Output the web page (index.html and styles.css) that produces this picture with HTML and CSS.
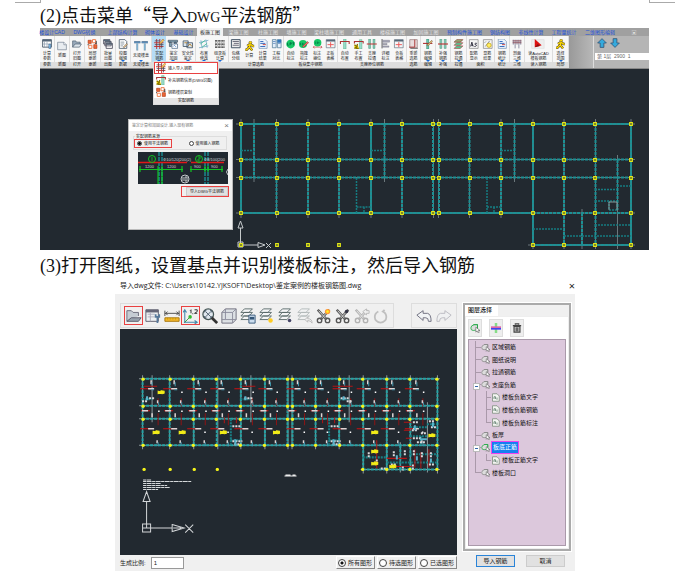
FILE: index.html
```
<!DOCTYPE html>
<html lang="zh-CN">
<head>
<meta charset="utf-8">
<title>导入 DWG 平法钢筋</title>
<link rel="stylesheet" href="styles.css">
</head>
<body>
<svg class="defs" aria-hidden="true">
  <symbol id="i-table" viewBox="0 0 16 16"><path d="M1 1h14v12H1z" fill="#fff" stroke="#456" stroke-width="1.4"/><path d="M1 1h14v3H1z" fill="#567"/><path d="M4 4v9M8 4v9M1 8h10" stroke="#89a" /><path d="M11 8h3v7h-3z" fill="#8cf" stroke="#357"/></symbol>
  <symbol id="i-doc" viewBox="0 0 16 16"><path d="M1 2h10l4 4v8H1z" fill="#e8ecf0" stroke="#678"/><path d="M11 2v4h4" fill="#fff" stroke="#678"/></symbol>
  <symbol id="i-folder" viewBox="0 0 16 16"><path d="M1 13V3h5l1 2h6v3" fill="#9ab" stroke="#456"/><path d="M1 13l4-5h10l-3 5z" fill="#dde5ec" stroke="#456"/></symbol>
  <symbol id="i-swap" viewBox="0 0 16 16"><path d="M1 2h5v5H1zM10 9h5v6h-5z" fill="#e63" stroke="#a31"/><path d="M8 1h5v5H8zM2 10h5v5H2z" fill="#fff" stroke="#e74" stroke-width="1.5"/><path d="M14 3v4M1 8v2M12 7h3" stroke="#333" stroke-width="1.4"/></symbol>
  <symbol id="i-stack" viewBox="0 0 16 16"><g fill="#fff" stroke="#445" stroke-width="1.3"><path d="M1 1h10v7H1zM3 4h10v7H3zM5 7h10v8H5z"/></g><path d="M1 1h10v2H1zM3 4h10v2H3zM5 7h10v2H5z" fill="#567"/></symbol>
  <symbol id="i-edit" viewBox="0 0 16 16"><path d="M2 1h9l3 3v11H2z" fill="#fff" stroke="#456" stroke-width="1.3"/><path d="M4 5h6M4 8h6M4 11h4" stroke="#567"/><path d="M8 13l6-6 1 2-5 5z" fill="#db8" stroke="#654" stroke-width=".7"/></symbol>
  <symbol id="i-tt" viewBox="0 0 24 16"><path d="M6 4v11M18 4v11" stroke="#79a" stroke-width="3"/><path d="M1 2h10M13 2h10" stroke="#357" stroke-width="3"/><path d="M1 2h10M13 2h10M6 4v10M18 4v10" stroke="#8cf"/></symbol>
  <symbol id="i-rebar" viewBox="0 0 16 16"><path d="M4 0v16M9 0v16M0 6h15M0 12h15" stroke="#b33" stroke-width="1.5"/><path d="M1 3h8M1 9h14M12 6v9" stroke="#445" stroke-width="1.2"/><path d="M8 7l6-7 2 2-6 6z" fill="#fc5" stroke="#853" stroke-width=".7"/></symbol>
  <symbol id="i-beam" viewBox="0 0 16 16"><path d="M0 2h15v3H0zM2 5h3v7H2zM10 5h3v5h-3z" fill="#8ab" stroke="#345"/><path d="M6 8h9v7H6z" fill="#fff" stroke="#357"/><path d="M8 12l2-2 3 3" stroke="#26b" fill="none"/></symbol>
  <symbol id="i-check" viewBox="0 0 16 16"><path d="M0 3h8v9H0zM6 6h9v8H6z" fill="#d8e4ee" stroke="#456" stroke-width="1.3"/><path d="M8 11l3-3 3 4M2 6h4" stroke="#b71" fill="none" stroke-width="1.3"/></symbol>
  <symbol id="i-plan" viewBox="0 0 16 16"><path d="M0 6l15-4M0 14l15-3M3 2l2 13M11 1l2 13" stroke="#59b" fill="none"/><path d="M2 8l8-6M5 13l8-6" stroke="#4b9" stroke-width="1.4"/></symbol>
  <symbol id="i-dash" viewBox="0 0 16 16"><path d="M0 3h16M0 8h16M0 13h16" stroke="#333" stroke-width="2" stroke-dasharray="4 1"/><path d="M0 5.500h16M0 10.500h16" stroke="#888" stroke-dasharray="2 1"/></symbol>
  <symbol id="i-list" viewBox="0 0 16 16"><path d="M1 1h14v13H1z" fill="#eee" stroke="#456" stroke-width="1.6"/><path d="M3 4h10M5 7h8M3 10h10" stroke="#556" stroke-width="1.3"/></symbol>
  <symbol id="i-man" viewBox="0 0 16 16"><circle cx="9" cy="2.500" r="2.300" fill="#fd0" stroke="#542" stroke-width=".8"/><path d="M8 5l-4 3M9 5l4 3h2M8 5v5l4 5M8 9l-5 5H1" stroke="#542" stroke-width="3.800" fill="none"/><path d="M8 5l-4 3M9 5l4 3h2M8 5v5l4 5M8 9l-5 5H1" stroke="#fd0" stroke-width="2" fill="none"/></symbol>
  <symbol id="i-report" viewBox="0 0 16 16"><path d="M2 0h9l4 4v11H2z" fill="#eef4fc" stroke="#68a"/><path d="M4 4h5M4 7h8M4 12h8" stroke="#36b" stroke-width="1.5"/><path d="M8 9h5" stroke="#c44" stroke-width="1.500"/></symbol>
  <symbol id="i-book" viewBox="0 0 16 16"><path d="M1 1h6v13H1zM9 1h6v13H9z" fill="#e4effa" stroke="#368"/><path d="M2 4h4M2 7h4M10 4h4M10 7h4" stroke="#36a"/><path d="M9 1h6v5H9z" fill="#37b"/></symbol>
  <symbol id="i-badge" viewBox="0 0 16 16"><circle cx="8" cy="8" r="7" fill="#17c765"/><path d="M3 10V6M3 10h2M7 10V6h2v2H7M11 6h3M12.500 6v4" stroke="#064" fill="none" stroke-width="1.2"/></symbol>
  <symbol id="i-badge2" viewBox="0 0 16 16"><circle cx="7" cy="8" r="6.500" fill="#17c765"/><path d="M3 10V6M6 10V6M6 8h3" stroke="#064"/><path d="M6 12l8-8 2 2-8 7z" fill="#f66" stroke="#633" stroke-width=".7"/></symbol>
  <symbol id="i-badge3" viewBox="0 0 16 16"><circle cx="8" cy="6" r="6" fill="#17c765"/><path d="M5 8V4M8 8V4M8 6h3" stroke="#064"/><path d="M1 13h14M3 11l-2 2 2 2M13 11l2 2-2 2" stroke="#b33" fill="none"/></symbol>
  <symbol id="i-cal" viewBox="0 0 16 16"><path d="M1 1h14v13H1z" fill="#f4f6f8" stroke="#567"/><path d="M1 1h14v3H1z" fill="#567"/><path d="M8 5v8M3 9h10" stroke="#e55" stroke-width="1.500"/></symbol>
  <symbol id="i-sup" viewBox="0 0 16 16"><path d="M6 0h4v16H6z" fill="#9dc" stroke="#396" stroke-width=".6"/><path d="M1 8V4h14v4" stroke="#a33" fill="none" stroke-width="1.700"/></symbol>
  <symbol id="i-suphand" viewBox="0 0 16 16"><path d="M9 1h4v15H9z" fill="#9dc" stroke="#396" stroke-width=".6"/><path d="M1 7V4h14v3" stroke="#a33" fill="none" stroke-width="1.700"/><path d="M1 9l4 3-4 3M6 8l-2 7h4" stroke="#870" stroke-width="2" fill="#fd0"/></symbol>
  <symbol id="i-two" viewBox="0 0 16 16"><path d="M3 0h3v15H3zM10 0h3v15h-3z" fill="#8cb" stroke="#386" stroke-width=".7"/><path d="M0 8h16" stroke="#b33" stroke-width="1.800"/></symbol>
  <symbol id="i-align" viewBox="0 0 16 16"><path d="M2 0v15" stroke="#555" stroke-width="1.5"/><path d="M3 2h11v3H3zM3 7h7v2H3zM3 11h10v2H3z" fill="#aab" stroke="#667" stroke-width=".6"/></symbol>
  <symbol id="i-sect" viewBox="0 0 16 16"><path d="M2 1h12v13H2z" fill="#e9dcdc" stroke="#866"/><path d="M10 1v12H1" stroke="#a33" stroke-width="1.500" fill="none"/><path d="M3 15h12" stroke="#333"/></symbol>
  <symbol id="i-cross" viewBox="0 0 16 16"><path d="M6 0h3v16H6z" fill="#7cb" stroke="#286"/><path d="M0 7h15" stroke="#a22" stroke-width="1.600"/><path d="M6 10l8-8 1 2-7 7z" fill="#eb6" stroke="#444" stroke-width=".7"/></symbol>
  <symbol id="i-layers" viewBox="0 0 16 16"><path d="M1 5l4-4h10l-4 4z" fill="#9a7" stroke="#732"/><path d="M1 10l4-4h10l-4 4zM1 15l4-4h10l-4 4z" fill="#5c9" stroke="#a33"/></symbol>
  <symbol id="i-as" viewBox="0 0 16 16"><path d="M1 1h14v14H1z" fill="#f5f5f5" stroke="#777"/><path d="M3 12l2-7 2 7M4 10h3M13 7c-4-1-4 2-2 2s2 3-2 3" stroke="#223" stroke-width="1.400" fill="none"/></symbol>
  <symbol id="i-bulb" viewBox="0 0 16 16"><path d="M1 1h14v14H1z" fill="#f5f5f5" stroke="#777"/><path d="M3 6l2-2M4 12l7-9" stroke="#456"/><circle cx="10" cy="10" r="3.500" fill="#fe6" stroke="#b90"/></symbol>
  <symbol id="i-comb" viewBox="0 0 16 16"><path d="M1 3h14M1 6h14" stroke="#a44" stroke-width="1.400"/><path d="M2 1v8M5 1v14M8 1v8M11 1v14M14 1v8" stroke="#557"/></symbol>
  <symbol id="i-cad" viewBox="0 0 24 16"><path d="M1 1h20v14H1z" fill="#eee" stroke="#ddd"/><path d="M6 0l11 10-3 1-8 2z" fill="#d11"/><path d="M6 13l8-2-3-3z" fill="#811"/></symbol>
  <symbol id="i-up" viewBox="0 0 16 16"><path d="M8 1l7 7h-4v7H5V8H1z" fill="#3ad" stroke="#357" stroke-width="1.300"/></symbol>
  <symbol id="i-down" viewBox="0 0 16 16"><path d="M8 15l7-7h-4V1H5v7H1z" fill="#3ad" stroke="#357" stroke-width="1.300"/></symbol>

  <symbol id="t-open" viewBox="0 0 18 18"><path d="M1 15V3h5l2 2h6v4" fill="#c5ccd3" stroke="#667"/><path d="M1 15l5-4h11l-3 4z" fill="#98a3ae" stroke="#556"/></symbol>
  <symbol id="t-form" viewBox="0 0 18 18"><path d="M1 2h14v13H1z" fill="#eef0f2" stroke="#556"/><path d="M1 2h14v3H1z" fill="#667"/><path d="M3 7h8M3 10h8M6 5v10" stroke="#aab"/><path d="M12 7v3h4V7M14 10v7" stroke="#57799b" stroke-width="2" fill="none"/></symbol>
  <symbol id="t-rule" viewBox="0 0 18 18"><path d="M1 3v6M17 3v6M1 6h16M4 4L2 6l2 2M14 4l2 2-2 2" stroke="#444" fill="none"/><path d="M1 11h16v4H1z" fill="#f2b72c" stroke="#a67408"/><path d="M4 11v2M7 11v2M10 11v2M13 11v2" stroke="#c90"/></symbol>
  <symbol id="t-base" viewBox="0 0 18 18"><path d="M2 17V2M1 16h15M0 5l2-3 2 3M13 14l3 2-3 2" stroke="#48a" fill="none" stroke-width="1.200"/><path d="M2 16l7-7" stroke="#393"/><circle cx="8" cy="10" r="2" fill="#3b3"/><path d="M8 3l1-1v4M11 6v1M13 2h3v2l-3 2h3" stroke="#222" fill="none"/></symbol>
  <symbol id="t-zoom" viewBox="0 0 18 18"><circle cx="7" cy="7" r="6" fill="#dfe7ee" stroke="#455" stroke-width="1.400"/><path d="M4 4l6 6M10 4l-6 6M3 5V3h2M9 3h2v2M3 9v2h2M11 9v2H9" stroke="#456" fill="none"/><path d="M11 11l6 6" stroke="#333" stroke-width="3"/></symbol>
  <symbol id="t-cube" viewBox="0 0 18 18"><path d="M1 5l4-4h12v12l-4 4H1z" fill="#dde1e5" stroke="#667"/><path d="M1 5h12v12M13 5l4-4M5 1v12H1M5 13h12" fill="none" stroke="#889"/></symbol>
  <symbol id="t-lay" viewBox="0 0 18 18"><g fill="#f4f5f6" stroke="#566"><path d="M1 13l4-4h9l-4 4zM1 9l4-4h9l-4 4zM1 5l4-4h9l-4 4z"/></g></symbol>
  <symbol id="t-cut" viewBox="0 0 18 18"><path d="M2 2l10 11M15 2L5 13" stroke="#555" stroke-width="2.800"/><path d="M3 3l9 10M14 3L5 13" stroke="#ddd"/><circle cx="4" cy="14" r="2.500" fill="none" stroke="#555" stroke-width="1.500"/><circle cx="13" cy="14" r="2.500" fill="none" stroke="#555" stroke-width="1.500"/></symbol>
  <symbol id="t-undo" viewBox="0 0 18 18"><path d="M1 8l7-5v3h5q4 1 4 9h-3q0-4-3-4H8v3z" fill="#f1f3f5" stroke="#667"/></symbol>
  <symbol id="n-pick" viewBox="0 0 12 12"><path d="M1 6q0-3 4-4h4v5q-2 2-5 2-3 0-3-3z" fill="#ddd" stroke="currentColor"/><path d="M4 2h5v4" fill="none" stroke="currentColor"/><path d="M7 5v6l1.500-1.500L10 12l1-1-1-2h2z" fill="#fff" stroke="#555" stroke-width=".7"/></symbol>
  <symbol id="n-page" viewBox="0 0 12 12"><path d="M2 1h6l3 3v7H2z" fill="#f4f6f2" stroke="#787"/><path d="M4 8V5h2v3M8 6v3" stroke="#576" fill="none"/></symbol>

  <symbol id="node" viewBox="0 0 4 4"><path d="M.7.7h2.600v2.600H.7z" fill="#263238" stroke="#e6ea16" stroke-width="1.200"/></symbol>
  <symbol id="dot" viewBox="0 0 4 4"><circle cx="2" cy="2" r="1.700" fill="#f6f51a"/></symbol>
  <g id="marks"><path d="M-6 388.500H6M-5 410.500H4M-6 428.500H5" stroke="#c11" /><path d="M12 398v8M12 413v12" stroke="#8c1515"/><path d="M2 388.500h6M-4 410.500h6M2 428.500h6M5 380v4M11.500 400v3M11 440v3M6 413v4" stroke="#ded5d5" stroke-width="1.500"/><path d="M12 392h1.500M12 411h1.500M11 432h1.500" stroke="#fff" stroke-width="1.500"/><path d="M6 382v4M12.500 402v3M12 442v4M5 389.500h3" stroke="#4197ad"/></g>
  <path id="blob" d="M-3-1l2 .5L0-1.500l3 .5v2l-2 .5-2-.5-2 .5z" fill="#f3ed18" stroke="#f3ed18"/>
</svg>

<div class="crop-marks"><i></i><i></i></div>
<main>
  <h1><span>(2)</span>点击菜单“导入<span class="term">DWG</span>平法钢筋”</h1>

  <section class="cad-app">
    <nav class="tabs">
      <a href="#">楼设计CAD</a><a href="#">DWG转换</a><a href="#">上部结构计算</a><a href="#">砌体设计</a><a href="#">基础设计</a><a href="#" class="active">板施工图</a><a href="#" class="dim">梁施工图</a><a href="#" class="dim">柱施工图</a><a href="#" class="dim">墙施工图</a><a href="#" class="dim">梁柱墙施工图</a><a href="#" class="dim">通用工具</a><a href="#" class="dim">楼梯施工图</a><a href="#" class="dim">加固施工图</a><a href="#">预制构件施工图</a><a href="#">钢结构图</a><a href="#">非线性计算</a><a href="#">工程量统计</a><a href="#">二维图形编辑</a><a href="#" class="dim">▣</a>
    </nav>
    <div class="ribbon">
      <div class="group"><div><button><svg><use href="#i-table"/></svg>计算<br>参数</button></div><p>参数</p></div>
      <div class="group"><div><button><svg><use href="#i-doc"/></svg>新图</button></div><p>新图</p></div>
      <div class="group"><div><button><svg><use href="#i-folder"/></svg>打开<br>旧图</button></div><p>打开</p></div>
      <div class="group"><div><button><svg><use href="#i-swap"/></svg>局部<br>更新</button></div><p>更新</p></div>
      <div class="group"><div><button><svg><use href="#i-stack"/></svg>批量<br>出图</button></div><p>出图</p></div>
      <div class="group"><div><button class="more"><svg><use href="#i-edit"/></svg>校图<br>编辑</button></div><p>数据</p></div>
      <div class="group"><div><button class="more"><svg><use href="#i-tt"/></svg>无梁楼盖</button></div><p>无梁楼盖</p></div>
      <div class="group"><div><button class="more on"><svg><use href="#i-rebar"/></svg>实配<br>钢筋</button><button class="more"><svg><use href="#i-beam"/></svg>鉴定<br>加固</button><button class="more"><svg><use href="#i-check"/></svg>安全性<br>鉴定</button></div><p></p>
        <div class="menu">
          <button class="marked"><svg><use href="#i-rebar"/></svg>输入导入钢筋</button>
          <button><svg><use href="#i-suphand"/></svg>补充钢筋信息(DWG识图)</button>
          <button><svg><use href="#i-swap"/></svg>钢筋楼层复制</button>
          <p>实配钢筋</p>
        </div>
      </div>
      <div class="group"><div><button class="more"><svg><use href="#i-plan"/></svg>布置<br>修改</button><button class="more"><svg><use href="#i-dash"/></svg>组录板<br>计算</button></div><p></p></div>
      <div class="group"><div><button><svg><use href="#i-list"/></svg>包络<br>分组</button><button><svg><use href="#i-man"/></svg>计算</button><button><svg><use href="#i-report"/></svg>计算<br>结果</button><button><svg><use href="#i-book"/></svg>工程<br>对比</button></div><p>计算选筋</p></div>
      <div class="group"><div><button><svg><use href="#i-badge"/></svg>自动<br>标注</button><button><svg><use href="#i-badge2"/></svg>拖拽<br>标注</button><button><svg><use href="#i-badge3"/></svg>标注<br>换位</button><button><svg><use href="#i-cal"/></svg>正板<br>表格</button></div><p>板块集中钢筋</p></div>
      <div class="group"><div><button><svg><use href="#i-sup"/></svg>自动<br>布置</button><button><svg><use href="#i-suphand"/></svg>手工<br>布置</button><button><svg><use href="#i-two"/></svg>支座<br>拉通</button><button><svg><use href="#i-align"/></svg>详细<br>标注</button><button><svg><use href="#i-cal"/></svg>负板<br>表格</button></div><p>支座原位钢筋</p></div>
      <div class="group"><div><button><svg><use href="#i-sect"/></svg>重新<br>选筋</button></div><p>选筋</p></div>
      <div class="group"><div><button class="more"><svg><use href="#i-cross"/></svg>钢筋<br>编辑</button></div><p>编辑</p></div>
      <div class="group"><div><button class="more"><svg><use href="#i-two"/></svg>补强<br>钢筋</button></div><p>补强</p></div>
      <div class="group"><div><button class="more"><svg><use href="#i-layers"/></svg>钢筋<br>拉通</button></div><p>拉通</p></div>
      <div class="group"><div><button><svg><use href="#i-as"/></svg>配筋<br>显示</button><button><svg><use href="#i-bulb"/></svg>显筋<br>结果</button></div><p>面积</p></div>
      <div class="group"><div><button class="more"><svg><use href="#i-report"/></svg>钢筋<br>统计</button></div><p>统计</p></div>
      <div class="group"><div><button class="more"><svg><use href="#i-comb"/></svg>剖面<br>三维</button></div><p>三维</p></div>
      <div class="group"><div><button><svg><use href="#i-cad"/></svg>读AutoCAD<br>楼板钢筋</button></div><p>读入钢筋</p></div>
      <div class="group"><div><button class="more"><svg><use href="#i-man"/></svg>选择<br>范围</button></div><p>局部</p></div>
      <div class="spacer"></div>
      <div class="storey">
        <div><button aria-label="上一层"><svg><use href="#i-up"/></svg></button><button aria-label="下一层"><svg><use href="#i-down"/></svg></button></div>
        <select aria-label="楼层"><option>第 1层&nbsp; 2900 &nbsp;1</option></select>
      </div>
    </div>

    <div class="canvas">
      <svg class="drawing" viewBox="40 69 609 181" aria-label="结构平面图">
        <path d="M236 124h399M236 159.500h399M236 177.500h399M236 213h399M241 119v99M276.500 119v99M308 119v99M339 119v99M371 119v99M402 119v99M433.500 119v99M438.500 119v99M469.500 119v99M501 119v99M533 119v130M564 119v130M595.500 119v130M631 119v130M254 119v63M384.500 119v63M514.500 119v63M617.500 155v94M582 209v40M528 245h107" stroke="#6b777b" fill="none"/>
        <path d="M241 124h390M241 213h292M241 124v89M371 124v89M533 124v121M631 124v121M533 245h98" stroke="#28989b" stroke-width="1.500" fill="none"/>
        <path d="M241 124h390M241 159.500h390M241 177.500h390M241 213h390M241 124v89M276.500 124v89M308 124v89M339 124v89M371 124v89M402 124v89M433 124v89M439 124v89M469.500 124v89M501 124v89M533 124v121M564 124v121M595.500 124v121M631 124v121M254 124v54M384.500 124v54M514.500 124v54M617.500 160v50M582 213v32M533 245h98" stroke="#1d9094" stroke-width="2" stroke-dasharray="3 1" fill="none"/>
        <path d="M241 150.500h13M371 150.500h13M501 150.500h13M356.500 178v35M356.500 207H371M364 207v6M487 178v35M487 207h14M494 207v6M595 189.500h22M617 186h14M595 201h22M609 201v9h9M533 229h31M564 236h67M595 225h36" stroke="#167b80" stroke-width="1.500" stroke-dasharray="2 1" fill="none"/>
        <path d="M617 202h-8v8M617 202v8" stroke="#899" fill="none"/>
        <g>
          <use href="#node" width="4" height="4" x="239" y="122"/><use href="#node" width="4" height="4" x="275" y="122"/><use href="#node" width="4" height="4" x="306" y="122"/><use href="#node" width="4" height="4" x="337" y="122"/><use href="#node" width="4" height="4" x="369" y="122"/><use href="#node" width="4" height="4" x="400" y="122"/><use href="#node" width="4" height="4" x="431" y="122"/><use href="#node" width="4" height="4" x="437" y="122"/><use href="#node" width="4" height="4" x="468" y="122"/><use href="#node" width="4" height="4" x="499" y="122"/><use href="#node" width="4" height="4" x="531" y="122"/><use href="#node" width="4" height="4" x="562" y="122"/><use href="#node" width="4" height="4" x="593" y="122"/><use href="#node" width="4" height="4" x="629" y="122"/>
        </g>
        <g id="row2">
          <use href="#node" width="4" height="4" x="239" y="158"/><use href="#node" width="4" height="4" x="275" y="158"/><use href="#node" width="4" height="4" x="306" y="158"/><use href="#node" width="4" height="4" x="337" y="158"/><use href="#node" width="4" height="4" x="369" y="158"/><use href="#node" width="4" height="4" x="400" y="158"/><use href="#node" width="4" height="4" x="431" y="158"/><use href="#node" width="4" height="4" x="437" y="158"/><use href="#node" width="4" height="4" x="468" y="158"/><use href="#node" width="4" height="4" x="499" y="158"/><use href="#node" width="4" height="4" x="531" y="158"/><use href="#node" width="4" height="4" x="562" y="158"/><use href="#node" width="4" height="4" x="593" y="158"/><use href="#node" width="4" height="4" x="629" y="158"/>
        </g>
        <use href="#row2" y="18"/><use href="#row2" y="53"/>
        <g><use href="#node" width="4" height="4" x="531" y="243"/><use href="#node" width="4" height="4" x="562" y="243"/><use href="#node" width="4" height="4" x="593" y="243"/><use href="#node" width="4" height="4" x="629" y="243"/><use href="#node" width="4" height="4" x="275" y="243"/><use href="#node" width="4" height="4" x="306" y="243"/><use href="#node" width="4" height="4" x="337" y="243"/></g>
        <path d="M240.500 247v-19M238 228l2.500-7 2.500 7zM238 245h20M258 242.500l7 2.500-7 2.500zM266 243l5 5M271 243l-5 5M238 242h5v5h-5z" stroke="#c5c9cb" fill="none"/><use href="#node" width="4" height="4" x="239" y="243"/>
      </svg>
      <form class="dialog">
        <header>鉴定计算和加固设计-输入现有钢筋<button type="button" aria-label="关闭">×</button></header>
        <fieldset>
          <legend>实配钢筋来源</legend>
          <label class="marked"><input type="radio" name="src" checked>使用平法钢筋</label>
          <label><input type="radio" name="src">使用输入钢筋</label>
        </fieldset>
        <svg class="preview" viewBox="0 0 90 32">
          <path d="M0 0h90v32H0z" fill="#202830"/>
          <path d="M21 0v32M24 0v32M67 0v32M70 0v32" stroke="#18b7bd" stroke-dasharray="4 1"/>
          <path d="M0 10.500h49M53 10.500h33" stroke="#e01818" stroke-width="1.300"/>
          <path d="M1 17.500h44M52 17.500h33M2 14v6M20 14v18M24 14v18M44 14v6M53 14v6M67 14v6M70 14v6M84 14v6" stroke="#12c622" stroke-width="1.200"/>
          <circle cx="14" cy="7" r="3.500" fill="none" stroke="#12c622"/><circle cx="61" cy="7" r="3.500" fill="none" stroke="#12c622"/><path d="M14 5v4M60 5h2v2h-2v2h2" stroke="#12c622" stroke-width=".8" fill="none"/>
          <circle cx="47" cy="27" r="4" fill="none" stroke="#c5c9cb"/><path d="M45 25v4M47 25h2v4h-2z" stroke="#c5c9cb" fill="none"/><path d="M90 17q-3 3 0 6" stroke="#c5c9cb" fill="none"/>
          <g fill="#d5d9db" font-size="4"><text x="25" y="9">Φ10/120[200(2)</text><text x="66" y="9">Φ8/100[200</text><text x="7" y="16">1200</text><text x="29" y="16">1200</text><text x="56" y="16">900</text><text x="73" y="16">900</text></g>
        </svg>
        <div class="marked go"><button type="button">导入DWG平法钢筋</button></div>
      </form>
    </div>
  </section>

  <h1><span>(3)</span>打开图纸，设置基点并识别楼板标注，然后导入钢筋</h1>

  <section class="import">
    <header>导入dwg文件: C:\Users\10142.YJKSOFT\Desktop\鉴定案例的楼板钢筋图.dwg<button aria-label="关闭">×</button></header>
    <div class="cols">
      <div class="left">
        <div class="bars">
          <div class="bar">
            <button class="marked" aria-label="打开"><svg><use href="#t-open"/></svg></button>
            <button aria-label="属性"><svg><use href="#t-form"/></svg></button>
            <button aria-label="测量"><svg><use href="#t-rule"/></svg></button>
            <button class="marked" aria-label="基点"><svg><use href="#t-base"/></svg></button>
            <button aria-label="缩放"><svg><use href="#t-zoom"/></svg></button>
            <button aria-label="视图"><svg><use href="#t-cube"/></svg></button>
            <button aria-label="图层列表"><svg viewBox="0 0 18 18"><use href="#t-lay"/><path d="M10 8h7v9h-7z" fill="#cde" stroke="#357"/><path d="M11 10h5v3h-5z" fill="#357"/></svg></button>
            <button aria-label="显示图层"><svg viewBox="0 0 18 18"><use href="#t-lay"/><circle cx="13" cy="14" r="2.500" fill="#fc2"/></svg></button>
            <button aria-label="隐藏图层"><svg viewBox="0 0 18 18"><use href="#t-lay"/><circle cx="13" cy="14" r="2" fill="#446"/></svg></button>
            <button class="off" aria-label="恢复图层"><svg viewBox="0 0 18 18"><use href="#t-lay"/><path d="M9 13l3-3v2q5 0 5 5-2-3-5-3v2z" fill="#eee" stroke="#666"/></svg></button>
            <button aria-label="亮显剪切"><svg viewBox="0 0 18 18"><use href="#t-cut"/><circle cx="13" cy="4" r="3" fill="#f93"/><circle cx="13" cy="4" r="1.500" fill="#fe2"/></svg></button>
            <button aria-label="剪切"><svg viewBox="0 0 18 18"><use href="#t-cut"/><circle cx="13" cy="4" r="2" fill="#334"/></svg></button>
            <button class="off" aria-label="恢复剪切"><svg viewBox="0 0 18 18"><use href="#t-cut"/><path d="M10 4l4-3v2h3v3h-3v2z" fill="#eee" stroke="#666"/></svg></button>
            <button class="off" aria-label="刷新"><svg viewBox="0 0 18 18"><path d="M6 4q-4 2-4 6a6.500 6.500 0 0 0 13 0q0-4-4-6l2-2M11 4l3 2" fill="none" stroke="#777" stroke-width="2"/></svg></button>
          </div>
          <div class="bar undo">
            <button aria-label="撤销"><svg><use href="#t-undo"/></svg></button>
            <button class="off flip" aria-label="重做"><svg><use href="#t-undo"/></svg></button>
          </div>
        </div>
        <svg class="drawing" viewBox="120 329 336 225" aria-label="楼板钢筋图">
          <path d="M139 378.500h300M139 405.500h300M139 418.500h300M139 445h300M142.500 375v74M169.500 375v74M193.500 375v74M217.500 375v74M240.500 375v74M264.500 375v74M287.500 375v74M291.500 375v74M315 375v74M338.500 375v74M362.500 375v98M386 375v98M409.500 375v98M436.500 375v98M152 375v47M250.500 375v47M348.500 375v47M426.500 402v70M399.500 442v30M360 469h79" stroke="#8d999c" fill="none"/>
          <path d="M142 378.500h295M142 405.500h295M142 418.500h295M142 445h295M142.500 378v67M169.500 378v67M193.500 378v67M216.500 378v67M240.500 378v67M264.500 378v67M287 378v67M292 378v67M315 378v67M338.500 378v67M362.500 378v91M386 378v91M409.500 378v91M436.500 378v91M362 469h75M399.500 445v24" stroke="#24a3a5" stroke-width="2" stroke-dasharray="3 1" fill="none"/>
          <path d="M142 399h10M240 399h10M338 399h10M230.500 419v26M230 440h10M328.500 419v26M328 440h10M409 427h17M426 424h10M409 436h17M420 436v8M362 457h24M386 462h50M409 454h27" stroke="#187f84" stroke-width="2" stroke-dasharray="2 1" fill="none"/>
          <g fill="none"><use href="#marks" x="146"/><use href="#marks" x="169"/><use href="#marks" x="193"/><use href="#marks" x="216"/><use href="#marks" x="240"/><use href="#marks" x="264"/><use href="#marks" x="292"/><use href="#marks" x="315"/><use href="#marks" x="338"/><use href="#marks" x="362"/><use href="#marks" x="386"/><use href="#marks" x="410"/></g>
          <path d="M144 386h13M242 386h13M332 386h20M224 417v6M236 417v6M322 417v6M334 417v6M403 422h8M403 430h7M405 438h6M376 440v28M386 458h20M389 466h22M414 449v18M428 449v18M420 452v16" stroke="#b51515"/>
          <path d="M146 398h8M142 401h6M244 398h8M340 398h8M346 401h6M232 441h10M234 444h7M330 441h10M332 444h8M232 426h8M330 426h8M412 422h6M411 430h5M420 433h6M428 421h6M430 427h6M412 438h8M416 442h8M393 451v6M404 450v6M413 450v6M421 452v5M430 452v5M390 464h6M402 466v4M412 464v5M428 464h6M368 452v5M376 459v4M380 468h6" stroke="#d9d9dc" stroke-width="2" stroke-dasharray="2 1"/>
          <path d="M147 396v4M245 396v4M343 396v4M235 439v6M333 439v6M414 425v5M419 439h7M432 422v5M396 455v4M416 456v4M430 458v4" stroke="#5ab4cc" stroke-width="2"/>
          <g><use href="#blob" x="161" y="392"/><use href="#blob" x="156" y="432"/><use href="#blob" x="182" y="432"/><use href="#blob" x="223" y="432"/><use href="#blob" x="276" y="432"/><use href="#blob" x="374" y="432"/><use href="#blob" x="374" y="451"/><use href="#blob" x="374" y="463"/><use href="#blob" x="392" y="466"/><use href="#blob" x="431" y="435"/></g>
          <g id="dots"><use href="#dot" width="4" height="4" x="141" y="377"/><use href="#dot" width="4" height="4" x="168" y="377"/><use href="#dot" width="4" height="4" x="191" y="377"/><use href="#dot" width="4" height="4" x="214" y="377"/><use href="#dot" width="4" height="4" x="238" y="377"/><use href="#dot" width="4" height="4" x="262" y="377"/><use href="#dot" width="4" height="4" x="285" y="377"/><use href="#dot" width="4" height="4" x="290" y="377"/><use href="#dot" width="4" height="4" x="313" y="377"/><use href="#dot" width="4" height="4" x="337" y="377"/><use href="#dot" width="4" height="4" x="360" y="377"/><use href="#dot" width="4" height="4" x="384" y="377"/><use href="#dot" width="4" height="4" x="407" y="377"/><use href="#dot" width="4" height="4" x="434" y="377"/></g>
          <use href="#dots" y="27"/><use href="#dots" y="40"/><use href="#dots" y="66"/>
          <g><use href="#dot" width="4" height="4" x="360" y="467"/><use href="#dot" width="4" height="4" x="384" y="467"/><use href="#dot" width="4" height="4" x="407" y="467"/><use href="#dot" width="4" height="4" x="434" y="467"/><use href="#dot" width="4" height="4" x="142" y="467"/><use href="#dot" width="4" height="4" x="168" y="467"/><use href="#dot" width="4" height="4" x="192" y="467"/><use href="#dot" width="4" height="4" x="215" y="467"/></g>
          <path d="M143 479.500h8M143 481h48M143 483h18M143 485h24M143 487h27M143 489h15" stroke="#d5d8da" stroke-dasharray="3 .5 5 .5"/>
          <path d="M284 475.500h12M285 474.500h5M292 474.500h3" stroke="#eee"/>
          <path d="M146.500 528v-27M143 501l3.500-10 3.500 10zM146 527.500h26M172 524l12 3.500-12 3.500zM173 527.500h8M185 524l8 8M193 524l-8 8M142.500 523.500h8v8h-8zM142.500 527.500h8" stroke="#d3d6d8" fill="none"/>
        </svg>
        <div class="foot">
          <label for="ratio">生成比例:</label><input id="ratio" type="text" value="1">
          <span class="choices">
            <label><input type="radio" name="scope" checked>所有图形</label>
            <label><input type="radio" name="scope">待选图形</label>
            <label><input type="radio" name="scope">已选图形</label>
          </span>
        </div>
      </div>
      <aside>
        <div class="panel">
          <b class="tab">图层选择</b>
          <div class="sheet">
            <div class="tools">
              <button class="green" aria-label="拾取"><svg><use href="#n-pick"/></svg></button>
              <button aria-label="合并"><svg viewBox="0 0 12 12"><path d="M6 0v12" stroke="#8d8" stroke-width="3"/><path d="M0 5h12" stroke="#d6a" stroke-width="2"/><path d="M0 7h12" stroke="#44e" stroke-width="2"/></svg></button>
              <button aria-label="删除"><svg viewBox="0 0 12 12"><path d="M1 3h10M4 2V1h4v1M2.500 4h7v7h-7zM5 5v5M7 5v5" stroke="#444" fill="none" stroke-width="1.500"/></svg></button>
            </div>
            <ul class="tree">
              <li><svg><use href="#n-pick"/></svg>区域钢筋</li>
              <li><svg><use href="#n-pick"/></svg>图纸说明</li>
              <li><svg><use href="#n-pick"/></svg>拉通钢筋</li>
              <li class="open"><svg><use href="#n-pick"/></svg>支座负筋</li>
              <li class="sub"><svg><use href="#n-page"/></svg>楼板负筋文字</li>
              <li class="sub"><svg><use href="#n-page"/></svg>楼板负筋钢筋</li>
              <li class="sub end"><svg><use href="#n-page"/></svg>楼板负筋标注</li>
              <li><svg><use href="#n-pick"/></svg>板厚</li>
              <li class="open green"><svg><use href="#n-pick"/></svg><mark>板底正筋</mark></li>
              <li class="sub end"><svg><use href="#n-page"/></svg>楼板正筋文字</li>
              <li class="last"><svg><use href="#n-pick"/></svg>楼板洞口</li>
            </ul>
          </div>
        </div>
        <div class="actions"><button class="primary">导入钢筋</button><button>取消</button></div>
      </aside>
    </div>
  </section>
</main>
</body>
</html>
```
FILE: styles.css
```
* { box-sizing: border-box; }
body {
  margin: 0;
  background: #fff;
  color: #222;
  font-family: "Liberation Sans", "Noto Sans CJK SC", sans-serif;
}
button, input, select { font: inherit; color: inherit; margin: 0; padding: 0; }
button { border: 0; background: none; }
a { color: inherit; text-decoration: none; }
p { margin: 0; }
.defs { position: absolute; width: 0; height: 0; }

.crop-marks { display: flex; justify-content: space-between; padding: 0 21px 0 15px; height: 3px; }
.crop-marks i { width: 26px; border: solid #aaa; border-width: 0 1px 1px 0; }
.crop-marks i + i { border-width: 0 0 1px 1px; }

main { padding: 0 47px 0 40px; }
h1 {
  margin: 0;
  font: 400 18px/28px "Noto Sans CJK SC", sans-serif;
  color: #111;
  white-space: nowrap;
}
main > h1:first-child { line-height: 22px; padding-bottom: 3px; }
h1 span { font-family: "Liberation Serif", serif; line-height: 1; }
h1 .term { font-size: 14px; }

/* CAD application */
.cad-app { background: #222930; font-size: 4px; line-height: 5px; }
.tabs {
  display: grid;
  grid-template-columns: 24fr 41fr 35fr 30fr 27fr 26fr 31fr 28fr 29fr 36fr 30fr 31fr 36fr 41fr 30fr 32fr 34fr 38fr 30fr;
  background: #a0a0a0;
  color: #1c50d8;
  font-size: 5px;
  line-height: 8px;
}
.tabs a { min-width: 0; display: flex; justify-content: center; white-space: nowrap; }
.tabs .dim { color: #e4e4e4; }
.tabs .active { background: #f2f2f2; color: #222; }
.ribbon {
  display: grid;
  grid-template-columns: 15fr 15fr 15fr 16fr 15fr 15fr 21fr 44fr 33fr 55fr 54fr 69fr 14fr 15fr 15fr 16fr 28fr 15fr 15fr 28fr 16fr 25fr 55fr;
  background: #f7f7f7;
  border-bottom: 1px solid #888;
}
.group { position: relative; min-width: 0; border-right: 1px solid #ddd; }
.group > div:first-child { display: flex; align-items: flex-start; height: 26px; }
.group > p { height: 6px; background: #dedede; text-align: center; white-space: nowrap; color: #111; }
.group > div:first-child button {
  position: relative;
  flex: 1;
  min-width: 0;
  padding-top: 1px;
  display: flex;
  flex-direction: column;
  align-items: center;
  white-space: nowrap;
  text-align: center;
  height: 26px;
}
.group > div:first-child button { display: block; }
.group > div:first-child svg { display: block; width: 100%; height: 10px; margin: 0 0 2px; }
.group > div:first-child button { line-height: 5px; }
.group .more::after {
  content: "";
  position: absolute;
  left: calc(50% - 2px);
  bottom: 0;
  border: 2px solid transparent;
  border-top-color: #1669d8;
  border-bottom: 0;
}
.group .on { background: #b5dcf5; }
.spacer { background: linear-gradient(90deg, #999, #b8b8b8); border-right: 1px solid #ddd; }
.storey { background: #b5b5b5; display: flex; flex-direction: column; justify-content: space-between; padding: 2px 0 8px 1px; min-width: 0; }
.storey div { display: flex; gap: 3px; padding-left: 2px; }
.storey svg { display: block; width: 10px; height: 10px; }
.storey select { appearance: none; width: 100%; border: 0; background: #fff; border-radius: 0; padding-left: 2px; height: 7px; line-height: 7px; font-size: 5px; color: #666; }
.menu { position: absolute; z-index: 2; left: 1px; top: 25px; width: 66px; background: #fff; border: 1px solid #ddd; }
.menu button { display: flex; align-items: center; gap: 2px; width: 100%; height: 12px; padding-left: 2px; white-space: nowrap; }
.menu button svg { width: 10px; height: 10px; flex: none; }
.menu p { background: #e5e5e5; text-align: center; height: 6px; color: #111; }
.marked { outline: 1px solid #e94141; outline-offset: -1px; }

.canvas { position: relative; }
.drawing { display: block; width: 100%; background: #222930; }
.dialog { position: absolute; left: 88px; top: 50px; width: 105px; height: 111px; background: #f0f0f0; border: 1px solid #bbb; }
.dialog header { display: flex; justify-content: space-between; padding: 0 3px; height: 11px; line-height: 11px; background: #fff; color: #777; }
.dialog header button { font-size: 8px; }
.dialog fieldset { display: grid; grid-template-columns: 51fr 40fr; justify-items: start; margin: 3px 5px 0 4px; padding: 0 0 1px; border: 1px solid #ddd; min-width: 0; }
.dialog legend { padding: 0 1px; margin-left: 1px; line-height: 5px; }
.dialog label { display: flex; align-items: center; gap: 2px; height: 9px; padding: 0 4px 0 3px; color: #111; }
input[type="radio"] { appearance: none; flex: none; width: 5px; height: 5px; border: 1px solid #444; border-radius: 50%; background: #fff; }
input[type="radio"]:checked { background: radial-gradient(#111 0 1px, #fff 2px); }
.preview { display: block; width: 90px; height: 32px; margin: 2px 0 2px 9px; }
.go { width: 48px; margin-left: 52px; padding: 1px 1px 1px 5px; }
.go button { display: block; width: 100%; background: #e1e1e1; border: 1px solid #ccc; line-height: 7px; white-space: nowrap; }

/* import window */
.import { margin: 0 74px 0 75px; background: #f0f0f0; font-size: 6px; line-height: 10px; }
.import header { display: flex; justify-content: space-between; background: #fff; padding: 0 0 0 5px; height: 16px; white-space: nowrap; font: 7px/16px "Open Sans", "Noto Sans CJK SC", sans-serif; }
.import header button { font-size: 11px; line-height: 16px; }
.cols { display: grid; grid-template-columns: 337fr 108fr; gap: 6px; padding: 9px 4px 0 5px; }
.left { min-width: 0; }
.bars { display: flex; justify-content: space-between; margin-bottom: 1px; }
.bar { display: flex; border: 1px solid #ddd; padding: 2px 3px; height: 25px; }
.bar button { width: 19px; height: 19px; display: grid; place-items: center; }
.bar svg { width: 16px; height: 16px; display: block; }
.undo { padding: 2px; }
.undo button { width: 20px; }
.off { opacity: 0.4; }
.flip svg { transform: scaleX(-1); }
.foot { display: flex; align-items: center; height: 16px; white-space: nowrap; }
.foot > input { width: 33px; height: 12px; margin-left: 5px; border: 1px solid #999; background: #fff; padding-left: 2px; }
.choices { display: flex; gap: 2px; margin-left: auto; }
.choices label { display: flex; align-items: center; gap: 2px; height: 13px; padding: 0 2px 0 1px; border: 1px solid; border-color: #fff #888 #888 #fff; }
.choices input { width: 8px; height: 8px; }
.panel { display: flex; flex-direction: column; border: 2px solid #aaa; outline: 1px solid #fff; height: 248px; }
.tab { font-weight: 500; width: 33px; padding-left: 3px; line-height: 11px; background: #fff; }
.sheet { flex: 1; display: flex; flex-direction: column; background: #fff; border: 1px solid #eee; padding: 2px; }
.tools { display: flex; gap: 9px; padding: 1px; }
.tools button { display: grid; place-items: center; width: 12px; height: 16px; background: #eee; outline: 1px solid #ddd; }
.tools svg { width: 10px; height: 10px; }
.green { color: #2a4; }
.tree {
  flex: 1;
  display: grid;
  grid-auto-rows: 1fr;
  margin: 2px 0 0;
  padding: 1px 0 66px;
  list-style: none;
  background: #dcc8dc;
  border: 1px solid #a9a;
  color: #111;
}
.tree li {
  position: relative;
  display: flex;
  align-items: center;
  gap: 2px;
  padding-left: 12px;
  white-space: nowrap;
  background:
    linear-gradient(#a9a, #a9a) 6px 0 / 1px 100% no-repeat,
    linear-gradient(#a9a, #a9a) 6px 50% / 6px 1px no-repeat;
}
.tree svg { width: 9px; height: 9px; flex: none; color: #888; }
.tree .green svg { color: #2a4; }
.tree .sub {
  padding-left: 22px;
  background:
    linear-gradient(#a9a, #a9a) 6px 0 / 1px 100% no-repeat,
    linear-gradient(#a9a, #a9a) 17px 0 / 1px 100% no-repeat,
    linear-gradient(#a9a, #a9a) 17px 50% / 5px 1px no-repeat;
}
.tree .sub.end { background-size: 1px 100%, 1px 50%, 5px 1px; }
.tree .last { background-size: 1px 50%, 6px 1px; }
.tree .open::before { content: ""; position: absolute; left: 4px; top: 4px; width: 5px; height: 5px; background: linear-gradient(#36a, #36a) center / 3px 1px no-repeat #fff; border: 1px solid #bbb; }
.tree mark { background: #1580f0; color: #fff; outline: 1px solid #e4e; line-height: 11px; padding: 0 1px; }
.actions { display: flex; justify-content: space-between; padding: 4px 6px 0 13px; }
.actions button { width: 39px; height: 12px; line-height: 10px; background: #e1e1e1; border: 1px solid #ccc; }
.actions .primary { border-color: #2a84d8; }
```
